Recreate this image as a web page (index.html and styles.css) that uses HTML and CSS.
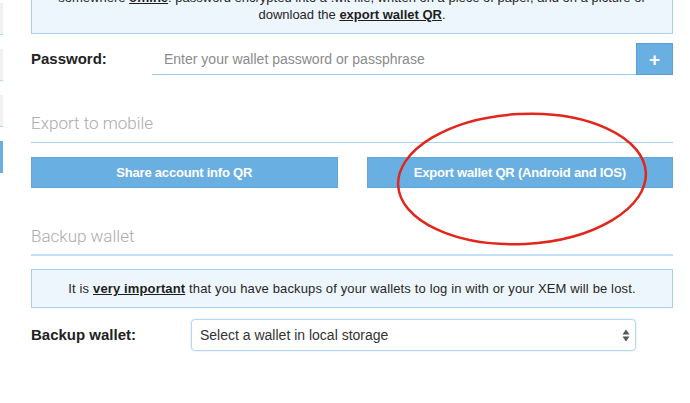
FILE: index.html
```html
<!DOCTYPE html>
<html lang="en">
  <head>
    <meta charset="UTF-8" />
    <meta name="viewport" content="width=device-width, initial-scale=1.0" />
    <title>Wallet - Export and Backup</title>
    <link rel="stylesheet" href="styles.css">
  </head>
  <body>
    <div class="page">
      <!-- left menu, mostly scrolled out of view -->
      <nav class="side">
        <a class="side-item"></a>
        <a class="side-item"></a>
        <a class="side-item"></a>
        <a class="side-item active"></a>
      </nav>

      <main class="panel">
        <div class="notice">
          <span class="nowrap">somewhere <b class="link">offline</b>: password encrypted into a .wlt file, written on a piece of paper, and on a picture or</span><br />
          download the <b class="link">export wallet QR</b>.
        </div>

        <div class="field">
          <label class="field-label" for="password">Password:</label>
          <input
            type="password"
            id="password"
            class="pw-input"
            placeholder="Enter your wallet password or passphrase"
          />
          <button class="plus-btn">+</button>
        </div>

        <h3 class="section-title">Export to mobile</h3>
        <div class="btn-row">
          <button class="btn">Share account info QR</button>
          <button class="btn">Export wallet QR (Android and IOS)</button>
        </div>

        <h3 class="section-title thick">Backup wallet</h3>
        <div class="notice single">
          It is <b class="link">very important</b> that you have backups of your
          wallets to log in with or your XEM will be lost.
        </div>

        <div class="field backup">
          <label class="field-label wide">Backup wallet:</label>
          <div class="select-box">
            <span>Select a wallet in local storage</span>
            <svg width="8" height="13" viewBox="0 0 8 13">
              <path d="M4 0.5 L7.5 5.5 H0.5 Z" fill="#555" />
              <path d="M4 12.5 L7.5 7.5 H0.5 Z" fill="#555" />
            </svg>
          </div>
        </div>
      </main>

      <!-- red hand drawn mark on top of the screenshot -->
      <svg class="mark" width="690" height="403" viewBox="0 0 690 403">
        <ellipse
          cx="522"
          cy="179"
          rx="124"
          ry="65"
          transform="rotate(-3 522 179)"
          fill="none"
          stroke="#e2261b"
          stroke-width="2.5"
        />
      </svg>
    </div>
  </body>
</html>
```

FILE: styles.css
```css
body {
  margin: 0;
  padding: 0;
  font-family: "Liberation Sans", Arial, sans-serif;
  color: #262626;
  background: #fff;
  overflow: hidden;
}
.page {
  display: flex;
  gap: 28px;
  position: relative;
  height: 403px;
}
.side {
  width: 3px;
  overflow: hidden;
  display: flex;
  flex-direction: column;
  gap: 14px;
  padding-top: 3px;
}
.side-item {
  display: block;
  height: 31px;
  background: #f1f1f1;
  border-bottom: 1px solid #b3d6f2;
}
.side-item.active {
  background: #6aafe1;
  border-bottom-color: #6aafe1;
}
.panel {
  width: 642px;
  margin-top: -22px;
}
.notice {
  background: #eef6fd;
  border: 1px solid #a8d1f1;
  padding: 10px;
  text-align: center;
  font-size: 13px;
  line-height: 17px;
}
.nowrap {
  white-space: nowrap;
}
.link {
  color: #1e1e1e;
  text-decoration: underline;
}
.notice.single {
  margin-top: 13px;
  letter-spacing: 0.14px;
}
.field {
  display: flex;
  align-items: center;
  margin-top: 9px;
}
.field-label {
  width: 121px;
  flex-shrink: 0;
  font-size: 15px;
  font-weight: bold;
  color: #222;
  margin-top: -2px;
}
.field-label.wide {
  width: 160px;
}
.pw-input {
  flex: 1;
  height: 32px;
  box-sizing: border-box;
  border: none;
  border-bottom: 1px solid #9ccbef;
  padding: 0 12px;
  font-family: inherit;
  font-size: 14px;
  outline: none;
}
.pw-input::placeholder {
  color: #8b8b8b;
}
.plus-btn {
  width: 37px;
  height: 32px;
  background: #6aafe1;
  border: 1px solid #5b9fd6;
  color: #fff;
  font-family: inherit;
  font-size: 19px;
  font-weight: bold;
  line-height: 1;
  padding: 0;
}
.section-title {
  margin: 38px 0 0;
  font-family: Roboto, "Liberation Sans", sans-serif;
  font-weight: 300;
  font-size: 17px;
  line-height: 20px;
  color: #ababab;
  padding-bottom: 9px;
  border-bottom: 1px solid #a6d0f0;
}
.section-title.thick {
  padding-bottom: 8px;
  border-bottom: 2px solid #c4e0f6;
}
.btn-row {
  display: grid;
  grid-template-columns: 1fr 1fr;
  gap: 29px;
  margin-top: 14px;
}
.btn {
  height: 31px;
  background: #6aafe1;
  border: 1px solid #62a8dd;
  color: #fff;
  font-family: inherit;
  font-size: 13px;
  font-weight: bold;
  letter-spacing: -0.2px;
  padding: 0;
}
.field.backup {
  margin-top: 11px;
}
.select-box {
  width: 445px;
  height: 32px;
  box-sizing: border-box;
  border: 1px solid #b5d7f3;
  border-radius: 4px;
  box-shadow: 0 0 2px rgba(120, 180, 230, 0.4);
  display: flex;
  align-items: center;
  justify-content: space-between;
  padding: 0 5px 0 8px;
  font-size: 14px;
  color: #333;
}
.mark {
  position: absolute;
  left: 0;
  top: 0;
  pointer-events: none;
}
```
